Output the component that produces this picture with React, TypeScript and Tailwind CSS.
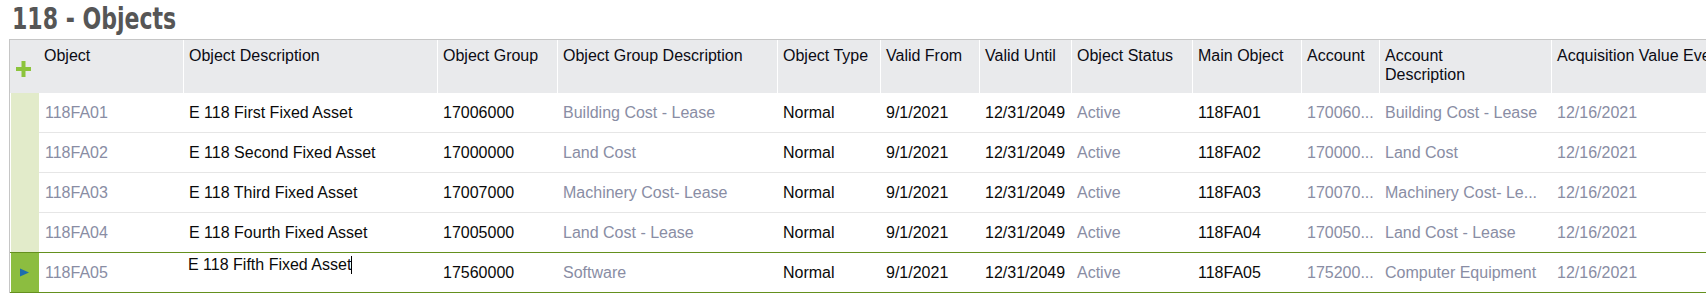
import React from "react";

type Row = {
  obj: string;
  desc: string;
  group: string;
  groupDesc: string;
  type: string;
  from: string;
  until: string;
  status: string;
  main: string;
  account: string;
  accDesc: string;
  acq: string;
};

const rows: Row[] = [
  { obj: "118FA01", desc: "E 118 First Fixed Asset", group: "17006000", groupDesc: "Building Cost - Lease", type: "Normal", from: "9/1/2021", until: "12/31/2049", status: "Active", main: "118FA01", account: "170060...", accDesc: "Building Cost - Lease", acq: "12/16/2021" },
  { obj: "118FA02", desc: "E 118 Second Fixed Asset", group: "17000000", groupDesc: "Land Cost", type: "Normal", from: "9/1/2021", until: "12/31/2049", status: "Active", main: "118FA02", account: "170000...", accDesc: "Land Cost", acq: "12/16/2021" },
  { obj: "118FA03", desc: "E 118 Third Fixed Asset", group: "17007000", groupDesc: "Machinery Cost- Lease", type: "Normal", from: "9/1/2021", until: "12/31/2049", status: "Active", main: "118FA03", account: "170070...", accDesc: "Machinery Cost- Le...", acq: "12/16/2021" },
  { obj: "118FA04", desc: "E 118 Fourth Fixed Asset", group: "17005000", groupDesc: "Land Cost - Lease", type: "Normal", from: "9/1/2021", until: "12/31/2049", status: "Active", main: "118FA04", account: "170050...", accDesc: "Land Cost - Lease", acq: "12/16/2021" },
  { obj: "118FA05", desc: "E 118 Fifth Fixed Asset", group: "17560000", groupDesc: "Software", type: "Normal", from: "9/1/2021", until: "12/31/2049", status: "Active", main: "118FA05", account: "175200...", accDesc: "Computer Equipment", acq: "12/16/2021" },
];

const GRAY = "text-[#898da4]";
const DARK = "text-[#0a0a0a]";

function Cell({ w, children, gray }: { w: string; children: React.ReactNode; gray?: boolean }) {
  return (
    <div className={`${w} shrink-0 pl-[6px] pr-[2px] flex items-center whitespace-nowrap overflow-hidden ${gray ? GRAY : DARK}`}>
      {children}
    </div>
  );
}

function HeadCell({ w, children, first }: { w: string; children: React.ReactNode; first?: boolean }) {
  return (
    <div className={`${w} shrink-0 h-full pt-[6px] pr-[4px] ${first ? "pl-[5px]" : "pl-[5px] border-l border-white"} text-[#0b0b14] leading-[19px] overflow-hidden`}>
      {children}
    </div>
  );
}

export default function App() {
  return (
    <div className="w-[1706px] h-[293px] overflow-hidden bg-white" style={{ fontFamily: '"Liberation Sans", Arial, sans-serif' }}>
      <div className="h-[39px] pl-[12px] flex items-start">
        <div
          className="text-[31px] leading-[36px] font-bold text-[#565656] origin-left scale-x-[0.79] whitespace-nowrap"
          style={{ fontFamily: '"DejaVu Sans Condensed", "Liberation Sans Narrow", "DejaVu Sans", sans-serif' }}
        >
          118 - Objects
        </div>
      </div>
      <div className="ml-[9px] border-l border-t border-[#c6c6c6] w-[1800px] text-[16px]">
        <div className="flex h-[53px] bg-[#e9eaec]">
          <div className="w-[29px] shrink-0 pl-[6px] pt-[21px]">
            <svg width="16" height="16" viewBox="0 0 16 16">
              <rect x="0" y="6" width="15" height="4" fill="#8cc43c" />
              <rect x="5.5" y="0" width="4" height="16" fill="#8cc43c" />
            </svg>
          </div>
          <HeadCell w="w-[144px]" first>Object</HeadCell>
          <HeadCell w="w-[254px]">Object Description</HeadCell>
          <HeadCell w="w-[120px]">Object Group</HeadCell>
          <HeadCell w="w-[220px]">Object Group Description</HeadCell>
          <HeadCell w="w-[103px]">Object Type</HeadCell>
          <HeadCell w="w-[99px]">Valid From</HeadCell>
          <HeadCell w="w-[92px]">Valid Until</HeadCell>
          <HeadCell w="w-[121px]">Object Status</HeadCell>
          <HeadCell w="w-[109px]">Main Object</HeadCell>
          <HeadCell w="w-[78px]">Account</HeadCell>
          <HeadCell w="w-[172px]">
            <div className="w-[120px]">Account Description</div>
          </HeadCell>
          <HeadCell w="w-[320px]">
            <span className="whitespace-nowrap">Acquisition Value Event Date</span>
          </HeadCell>
        </div>
        {rows.map((r, i) => {
          const selected = i === 4;
          const beforeSel = i === 3;
          const greenLine = selected || beforeSel;
          return (
            <div key={r.obj} className={`flex h-[40px] ${greenLine ? "border-b border-[#64901e]" : ""}`}>
              <div className={`w-[29px] shrink-0 border-l border-white flex items-center ${selected ? "bg-[#8cbd40]" : "bg-[#e2ebca]"}`}>
                {selected && (
                  <svg width="10" height="10" viewBox="0 0 10 10" className="ml-[9px] mt-[1px]">
                    <polygon points="0,0.5 9,4.5 0,8.5" fill="#1b6dae" />
                  </svg>
                )}
              </div>
              <div className={`flex flex-1 ${greenLine ? "" : "border-b border-[#e6e6e6]"}`}>
                <Cell w="w-[144px]" gray>{r.obj}</Cell>
                {selected ? (
                  <div className={`w-[254px] shrink-0 pl-[5px] pt-[2px] whitespace-nowrap ${DARK} leading-[19px] flex items-start`}>
                    <span>{r.desc}</span>
                    <span className="inline-block w-[1px] h-[18px] bg-black mt-[1px]" />
                  </div>
                ) : (
                  <Cell w="w-[254px]">{r.desc}</Cell>
                )}
                <Cell w="w-[120px]">{r.group}</Cell>
                <Cell w="w-[220px]" gray>{r.groupDesc}</Cell>
                <Cell w="w-[103px]">{r.type}</Cell>
                <Cell w="w-[99px]">{r.from}</Cell>
                <Cell w="w-[92px]">{r.until}</Cell>
                <Cell w="w-[121px]" gray>{r.status}</Cell>
                <Cell w="w-[109px]">{r.main}</Cell>
                <Cell w="w-[78px]" gray>{r.account}</Cell>
                <Cell w="w-[172px]" gray>{r.accDesc}</Cell>
                <Cell w="w-[320px]" gray>{r.acq}</Cell>
              </div>
            </div>
          );
        })}
      </div>
    </div>
  );
}
